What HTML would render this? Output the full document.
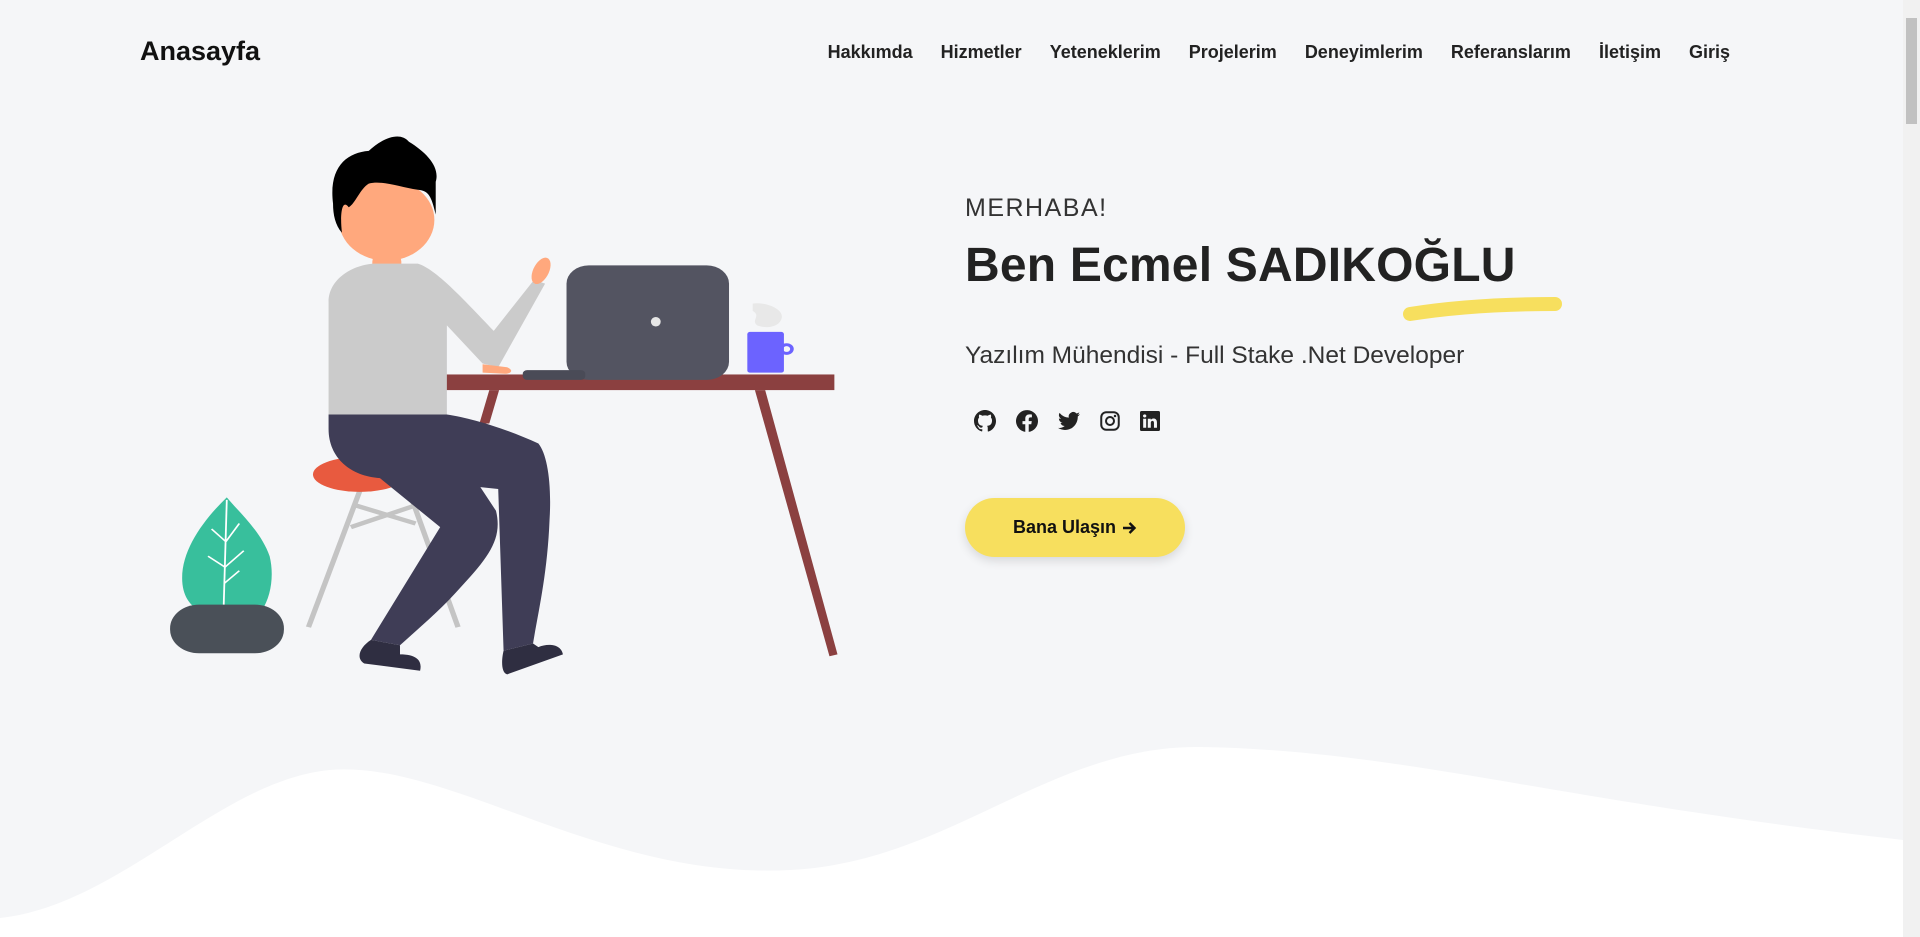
<!DOCTYPE html>
<html><head><meta charset="utf-8"><style>
html,body{margin:0;padding:0}
body{width:1920px;height:937px;overflow:hidden;background:#f5f6f8;font-family:"Liberation Sans",sans-serif;color:#212529;position:relative}
.logo{position:absolute;left:140px;top:36px;font-size:27px;font-weight:600;color:#111}
.nav{position:absolute;right:190px;top:42px;display:flex;gap:28px;font-size:18px;font-weight:bold;color:#222}
.sb{position:absolute;right:0;top:0;width:17px;height:937px;background:#f1f1f1}
.sb div{position:absolute;left:3px;top:18px;width:11px;height:106px;background:#c1c1c1;border-radius:0}
.hi{position:absolute;left:965px;top:194px;font-size:25px;font-weight:300;letter-spacing:1.5px;color:#333}
.name{position:absolute;left:965px;top:238px;font-size:48px;font-weight:bold;color:#222;letter-spacing:.2px}
.sub{position:absolute;left:965px;top:342px;font-size:24.5px;color:#333}
.icons{position:absolute;left:974px;top:410px;display:flex;gap:20px}
.btn{position:absolute;left:965px;top:498px;width:220px;height:59px;border-radius:30px;background:#f7df5e;box-shadow:0 4px 10px rgba(0,0,0,.12);font-size:18px;font-weight:bold;color:#111;display:flex;align-items:center;justify-content:center}
</style></head><body>
<div class="logo">Anasayfa</div>
<div class="nav"><span>Hakkımda</span><span>Hizmetler</span><span>Yeteneklerim</span><span>Projelerim</span><span>Deneyimlerim</span><span>Referanslarım</span><span>İletişim</span><span>Giriş</span></div>

<svg style="position:absolute;left:0;top:700px" width="1903" height="237" viewBox="0 700 1903 237"><path d="M0,918 C120,905 220,780 330,770 C450,760 600,880 790,870 C950,862 1050,745 1200,747 C1400,750 1550,800 1903,840 L1903,937 L0,937Z" fill="#fff"/></svg>

<svg style="position:absolute;left:150px;top:120px" width="700" height="570" viewBox="0 0 1568 1568" preserveAspectRatio="none">
<path d="M1350,505 C1380,500 1420,520 1415,545 C1410,570 1380,575 1360,565 C1345,550 1370,540 1350,525Z" fill="#e8e8e8"/>
<rect x="605" y="700" width="928" height="43" fill="#8b4040"/>
<polygon points="1355,743 1378,743 1540,1470 1522,1475" fill="#8b4040"/>
<polygon points="760,743 782,743 760,835 738,835" fill="#8b4040"/>
<rect x="933" y="400" width="364" height="315" rx="50" fill="#535461"/>
<ellipse cx="1133" cy="555" rx="11" ry="13" fill="#e6e6e6"/>
<rect x="835" y="688" width="140" height="27" rx="10" fill="#4a4b57"/>
<circle cx="1426" cy="630" r="12" fill="none" stroke="#6c63ff" stroke-width="8"/>
<rect x="1338" y="583" width="82" height="112" rx="6" fill="#6c63ff"/>
<line x1="470" y1="1020" x2="355" y2="1395" stroke="#c4c4c4" stroke-width="12"/>
<line x1="580" y1="1020" x2="690" y2="1395" stroke="#c4c4c4" stroke-width="12"/>
<line x1="460" y1="1060" x2="595" y2="1110" stroke="#c4c4c4" stroke-width="12"/>
<line x1="450" y1="1120" x2="595" y2="1060" stroke="#c4c4c4" stroke-width="12"/>
<ellipse cx="470" cy="975" rx="105" ry="48" fill="#e85a3f"/>
<rect x="498" y="360" width="65" height="82" rx="30" fill="#ffa87d"/>
<path d="M400,500 C400,440 450,400 500,395 L600,395 C640,410 700,490 770,580 L860,440 L885,450 L780,680 L745,670 L665,565 L665,810 L400,810Z" fill="#cbcbcb"/>
<ellipse cx="876" cy="415" rx="18" ry="38" transform="rotate(20 876 415)" fill="#ffa87d"/>
<path d="M745,672 L800,680 C815,688 810,698 795,698 L745,695Z" fill="#ffa87d"/>
<ellipse cx="530" cy="275" rx="107" ry="112" fill="#ffa87d"/>
<path d="M410,230 C400,130 440,90 490,85 C520,50 560,30 580,60 C620,90 650,130 640,170 L640,260 C630,210 625,195 600,192 C560,185 520,165 490,175 C470,190 460,230 445,240 C430,215 425,260 430,310 C415,290 410,260 410,230Z" fill="#000"/>
<path d="M400,810 L665,810 C720,820 800,850 870,890 C890,920 900,1000 895,1100 C890,1250 870,1350 858,1440 L792,1460 L780,1015 L740,1010 L775,1075 C790,1150 760,1200 700,1280 C650,1350 600,1400 560,1445 L495,1430 L650,1120 L515,985 C450,980 400,930 400,850Z" fill="#3f3d56"/>
<path d="M495,1430 L560,1445 L560,1470 C600,1470 610,1490 605,1515 L480,1495 C460,1480 470,1450 495,1430Z" fill="#2f2e41"/>
<path d="M792,1460 L858,1440 L870,1450 C890,1440 920,1440 925,1470 L800,1525 C785,1520 788,1480 792,1460Z" fill="#2f2e41"/>
<path d="M172,1038 C120,1100 72,1180 72,1260 C72,1310 90,1335 110,1350 L250,1350 C272,1310 278,1250 268,1200 C248,1130 200,1080 172,1038Z" fill="#38bf9c"/>
<g stroke="#fff" stroke-width="4" fill="none"><path d="M172,1045 L165,1340"/><path d="M170,1160 L138,1125"/><path d="M170,1160 L200,1110"/><path d="M168,1230 L130,1200"/><path d="M168,1230 L210,1185"/><path d="M166,1275 L200,1240"/></g>
<rect x="45" y="1333" width="255" height="134" rx="65" fill="#4a5058"/>
</svg>

<div class="hi">MERHABA!</div>
<div class="name">Ben Ecmel SADIKOĞLU</div>
<svg style="position:absolute;left:1400px;top:290px" width="170" height="35"><path d="M10,24 C60,16 110,14 155,14" stroke="#f7df5e" stroke-width="14" stroke-linecap="round" fill="none"/></svg>
<div class="sub">Yazılım Mühendisi - Full Stake .Net Developer</div>
<div class="icons">
<svg width="22" height="22" viewBox="0 0 16 16"><path fill="#222" d="M8 0C3.58 0 0 3.580 0 8c0 3.54 2.29 6.53 5.47 7.59.4.07.55-.17.55-.38v-1.33c-2.230.48-2.7-1.07-2.7-1.07-.36-.92-.89-1.17-.89-1.17-.73-.5.05-.49.05-.49.8.06 1.23.83 1.23.83.72 1.23 1.87.87 2.33.67.07-.52.28-.87.51-1.07-1.78-.2-3.64-.89-3.64-3.95 0-.87.31-1.59.82-2.150-.08-.2-.36-1.02.08-2.12 0 0 .67-.21 2.2.82a7.6 7.6 0 0 1 4 0c1.53-1.04 2.2-.82 2.2-.82.44 1.1.16 1.92.08 2.12.51.56.82 1.27.82 2.15 0 3.07-1.87 3.75-3.65 3.95.29.25.54.73.54 1.48v2.2c0 .21.15.46.55.38A8 8 0 0 0 16 8c0-4.42-3.58-8-8-8z"/></svg>
<svg width="22" height="22" viewBox="0 0 16 16"><path fill="#222" d="M16 8.05A8 8 0 1 0 6.75 15.95V10.4H4.72V8.05h2.03V6.3c0-2 1.19-3.1 3.02-3.1.87 0 1.79.15 1.79.15v1.97h-1.01c-.99 0-1.3.62-1.3 1.25v1.48h2.22l-.35 2.35H9.25v5.55A8 8 0 0 0 16 8.05z"/></svg>
<svg width="22" height="22" viewBox="0 0 16 16"><path fill="#222" d="M5.03 14.5c6.04 0 9.34-5 9.34-9.34v-.42A6.7 6.7 0 0 0 16 3.04a6.6 6.6 0 0 1-1.89.52A3.3 3.3 0 0 0 15.56 1.74a6.6 6.6 0 0 1-2.08.8A3.28 3.28 0 0 0 7.88 5.53 9.32 9.32 0 0 1 1.11 2.1a3.28 3.28 0 0 0 1.02 4.38A3.3 3.3 0 0 1 .64 6.07v.04a3.28 3.28 0 0 0 2.63 3.22 3.3 3.3 0 0 1-1.48.06 3.29 3.29 0 0 0 3.07 2.28A6.58 6.58 0 0 1 0 13.030a9.3 9.3 0 0 0 5.03 1.47z"/></svg>
<svg width="20" height="22" viewBox="0 0 16 16"><rect x="1" y="1" width="14" height="14" rx="4" fill="none" stroke="#222" stroke-width="1.6"/><circle cx="8" cy="8" r="3.2" fill="none" stroke="#222" stroke-width="1.6"/><circle cx="12" cy="4" r="1" fill="#222"/></svg>
<svg width="20" height="22" viewBox="0 0 16 16"><path fill="#222" d="M0 1.15C0 .5.53 0 1.2 0h13.6c.66 0 1.2.5 1.2 1.15v13.7c0 .64-.54 1.15-1.2 1.15H1.2C.53 16 0 15.5 0 14.85V1.15zM4.94 13.4V6.17H2.54v7.23h2.4zM3.74 5.18c.84 0 1.36-.56 1.36-1.25-.02-.71-.52-1.25-1.34-1.25-.82 0-1.36.54-1.36 1.25 0 .7.52 1.25 1.33 1.25h.01zM8.65 13.4V9.36c0-.21.02-.43.08-.58.17-.43.57-.88 1.23-.88.87 0 1.21.66 1.21 1.63v3.87h2.4V9.25c0-2.22-1.18-3.25-2.76-3.25-1.28 0-1.85.7-2.17 1.2V6.17h-2.4c.03.68 0 7.23 0 7.23h2.4z"/></svg>
</div>
<div class="btn">Bana Ulaşın&nbsp;<svg width="16" height="16" viewBox="0 0 16 16"><path d="M2,8 H13 M8.5,3 L13.5,8 L8.5,13" stroke="#111" stroke-width="2.4" fill="none"/></svg></div>
<div class="sb"><div></div></div>
</body></html>
